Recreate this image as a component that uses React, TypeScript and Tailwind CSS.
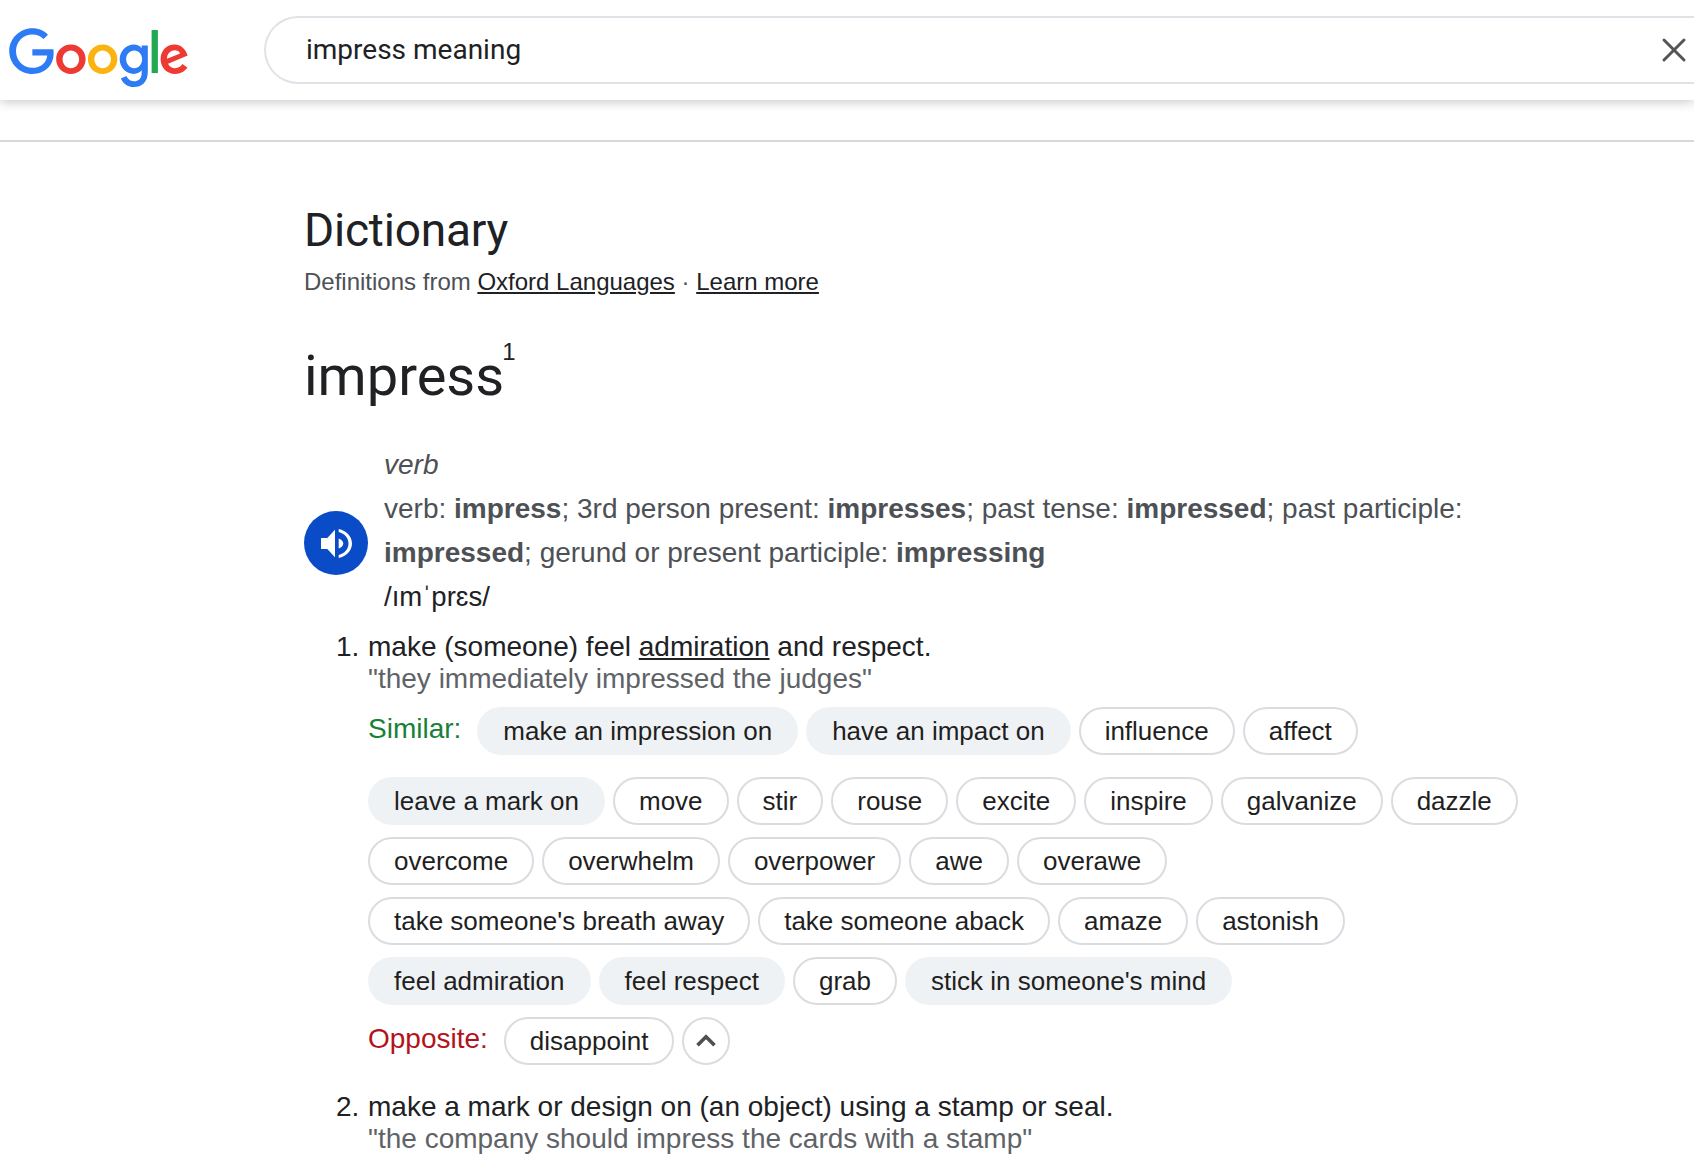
import React from 'react';
import { X, ChevronUp } from 'lucide-react';

const ARIAL = 'font-["Liberation_Sans",Arial,sans-serif]';

function GoogleLogo() {
  return (
    <svg width="180" height="61" viewBox="0 0 272 92" className="block">
      <path d="M115.75 47.18c0 12.770-9.990 22.180-22.250 22.180s-22.250-9.410-22.250-22.180C71.250 34.320 81.240 25 93.500 25s22.250 9.320 22.250 22.180zm-9.740 0c0-7.980-5.790-13.440-12.510-13.440S80.990 39.200 80.990 47.180c0 7.900 5.790 13.440 12.510 13.440s12.510-5.550 12.510-13.440z" fill="#ee3a33" />
      <path d="M163.750 47.180c0 12.770-9.990 22.180-22.250 22.180s-22.250-9.410-22.250-22.180c0-12.850 9.990-22.180 22.250-22.180s22.250 9.320 22.250 22.180zm-9.740 0c0-7.980-5.790-13.440-12.510-13.440s-12.510 5.460-12.510 13.440c0 7.900 5.790 13.440 12.510 13.440s12.510-5.550 12.510-13.440z" fill="#fbb30f" />
      <path d="M209.750 26.340v39.820c0 16.380-9.660 23.070-21.080 23.070-10.750 0-17.220-7.190-19.660-13.070l8.480-3.530c1.510 3.610 5.210 7.870 11.170 7.870 7.310 0 11.840-4.510 11.840-13v-3.190h-.34c-2.180 2.690-6.380 5.040-11.680 5.040-11.090 0-21.250-9.660-21.250-22.090 0-12.520 10.160-22.260 21.250-22.260 5.290 0 9.490 2.350 11.680 4.960h.34v-3.610h9.250zm-8.560 20.920c0-7.810-5.210-13.520-11.840-13.520-6.720 0-12.350 5.710-12.350 13.520 0 7.730 5.630 13.360 12.350 13.360 6.630 0 11.840-5.630 11.840-13.360z" fill="#2e7bf6" />
      <path d="M225 3v65h-9.500V3h9.500z" fill="#21a850" />
      <path d="M262.020 54.480l7.560 5.040c-2.440 3.610-8.320 9.830-18.480 9.830-12.600 0-22.010-9.740-22.010-22.180 0-13.190 9.490-22.180 20.920-22.180 11.510 0 17.140 9.160 18.980 14.110l1.010 2.520-29.650 12.280c2.270 4.450 5.800 6.720 10.750 6.720 4.960 0 8.400-2.440 10.920-6.140zm-23.270-7.980l19.820-8.230c-1.090-2.770-4.370-4.700-8.230-4.700-4.950 0-11.840 4.370-11.590 12.930z" fill="#ee3a33" />
      <path d="M35.290 41.410V32H67c.31 1.640.47 3.580.47 5.680 0 7.060-1.930 15.790-8.150 22.010-6.050 6.300-13.780 9.660-24.020 9.660C16.320 69.350.36 53.890.36 34.910.36 15.930 16.320.47 35.300.47c10.500 0 17.980 4.120 23.600 9.490l-6.640 6.640c-4.030-3.780-9.490-6.720-16.970-6.720-13.860 0-24.700 11.170-24.700 25.030 0 13.860 10.840 25.030 24.700 25.030 8.990 0 14.110-3.610 17.390-6.890 2.660-2.660 4.410-6.460 5.100-11.650l-22.490.01z" fill="#2e7bf6" />
    </svg>
  );
}

function SpeakerIcon() {
  return (
    <svg width="31" height="29" viewBox="0 0 31 29" fill="white">
      <path d="M0 9h6.300L14 .7v27.600l-7.700-8.300H0z" />
      <path d="M17.700 9.500c3 1 4.500 3 4.500 5s-1.500 4-4.500 5z" />
      <path d="M17.700 0C25.500 1.500 31 7.500 31 14.500S25.500 27.500 17.700 29v-3c5.800-1.500 9.800-6 9.800-11.500S23.500 4.500 17.700 3z" />
    </svg>
  );
}

function Chip({ label, filled }: { label: string; filled?: boolean }) {
  return (
    <span
      className={
        filled
          ? 'flex h-12 items-center rounded-full bg-[#eff2f4] px-[26px] text-[26px] text-[#1f1f1f] whitespace-nowrap'
          : 'flex h-12 items-center rounded-full border-2 border-[#dadce0] px-6 text-[26px] text-[#1f1f1f] whitespace-nowrap'
      }
    >
      {label}
    </span>
  );
}

export default function App() {
  return (
    <div className={`h-[1160px] w-full overflow-hidden bg-white ${ARIAL}`}>
      <header className="flex h-[100px] items-start bg-white pl-[9px] shadow-[0_2px_10px_rgba(0,0,0,0.22)]">
        <div className="mt-[28px] w-[255px] shrink-0">
          <GoogleLogo />
        </div>
        <div className="mt-4 flex h-[68px] flex-1 items-center justify-between rounded-l-[34px] border-y-2 border-l-2 border-[#dfe3e7] pl-[40px]">
          <span className='pb-[1px] font-["Roboto",sans-serif] text-[28px] text-[#202124]'>impress meaning</span>
          <X size={40} strokeWidth={1.8} className="text-[#555]" />
        </div>
      </header>
      <div className="mt-[40px] h-[2px] bg-[#d5d9de]" />

      <main className="pl-[304px]">
        <h2 className='mt-[61px] font-["Roboto",sans-serif] text-[46px] leading-[54px] font-normal tracking-[-0.2px] text-[#202124]'>Dictionary</h2>
        <p className="mt-[9px] text-[24px] leading-[32px] text-[#4d5156]">
          Definitions from <span className="text-[#202124] underline">Oxford Languages</span> · <span className="text-[#202124] underline">Learn more</span>
        </p>

        <div className="mt-[38px] flex items-start text-[#202124]">
          <span className='font-["Roboto",sans-serif] text-[56px] leading-[80px]'>impress</span>
          <span className="-ml-[2px] mt-[1px] text-[24px] leading-[30px]">1</span>
        </div>

        <div className="mt-[27px] flex items-start">
          <div className="mt-[68px] flex h-16 w-16 shrink-0 items-center justify-center rounded-full bg-[#0a4cc8]">
            <SpeakerIcon />
          </div>
          <div className="ml-4 text-[#202124]">
            <div className="text-[28px] italic leading-[44px] text-[#4d5156]">verb</div>
            <div className="max-w-[1180px] text-[28px] leading-[44px] text-[#4d5156]">
              verb: <b>impress</b>; 3rd person present: <b>impresses</b>; past tense: <b>impressed</b>; past participle: <b>impressed</b>; gerund or present participle: <b>impressing</b>
            </div>
            <div className="text-[27.5px] leading-[44px]">/ımˈprɛs/</div>
          </div>
        </div>

        <ol className="mt-[11px] text-[28px] text-[#202124]">
          <li className="flex">
            <span className="ml-[32px] w-[32px] shrink-0 leading-[34px]">1.</span>
            <div>
              <div className="leading-[34px]">make (someone) feel <span className="underline">admiration</span> and respect.</div>
              <div className="leading-[30px] text-[#5f6368]">"they immediately impressed the judges"</div>
              <div className="mt-[13px] flex items-start gap-2">
                <span className="mr-2 text-[28px] leading-[44px] text-[#188038]">Similar:</span>
                <Chip filled label="make an impression on" />
                <Chip filled label="have an impact on" />
                <Chip label="influence" />
                <Chip label="affect" />
              </div>
              <div className="mt-[22px] flex flex-col gap-3">
                <div className="flex gap-2">
                  <Chip filled label="leave a mark on" />
                  <Chip label="move" />
                  <Chip label="stir" />
                  <Chip label="rouse" />
                  <Chip label="excite" />
                  <Chip label="inspire" />
                  <Chip label="galvanize" />
                  <Chip label="dazzle" />
                </div>
                <div className="flex gap-2">
                  <Chip label="overcome" />
                  <Chip label="overwhelm" />
                  <Chip label="overpower" />
                  <Chip label="awe" />
                  <Chip label="overawe" />
                </div>
                <div className="flex gap-2">
                  <Chip label="take someone's breath away" />
                  <Chip label="take someone aback" />
                  <Chip label="amaze" />
                  <Chip label="astonish" />
                </div>
                <div className="flex gap-2">
                  <Chip filled label="feel admiration" />
                  <Chip filled label="feel respect" />
                  <Chip label="grab" />
                  <Chip filled label="stick in someone's mind" />
                </div>
              </div>
              <div className="mt-3 flex items-start gap-2">
                <span className="mr-2 text-[28px] leading-[44px] text-[#b3131b]">Opposite:</span>
                <Chip label="disappoint" />
                <span className="flex h-12 w-12 items-center justify-center rounded-full border-2 border-[#dadce0]">
                  <ChevronUp size={34} strokeWidth={2.6} strokeLinecap="butt" strokeLinejoin="miter" className="text-[#4d5156]" />
                </span>
              </div>
            </div>
          </li>
          <li className="mt-[25px] flex">
            <span className="ml-[32px] w-[32px] shrink-0 leading-[34px]">2.</span>
            <div>
              <div className="leading-[34px]">make a mark or design on (an object) using a stamp or seal.</div>
              <div className="leading-[30px] text-[#5f6368]">"the company should impress the cards with a stamp"</div>
            </div>
          </li>
        </ol>
      </main>
    </div>
  );
}
